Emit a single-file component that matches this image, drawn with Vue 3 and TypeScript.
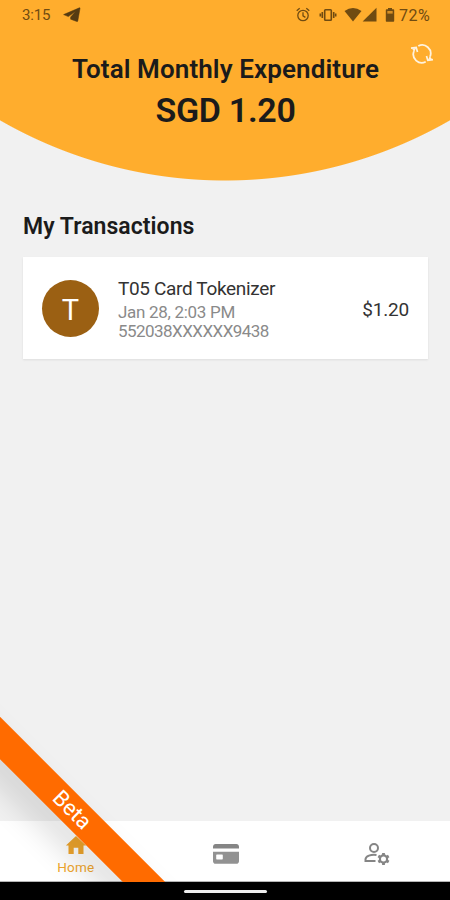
<script setup lang="ts">
interface Transaction {
  merchant: string
  date: string
  card: string
  amount: string
}

const transactions: Transaction[] = [
  { merchant: 'T05 Card Tokenizer', date: 'Jan 28, 2:03 PM', card: '552038XXXXXX9438', amount: '$1.20' },
]
</script>

<template>
  <div class="screen">
    <header class="hero">
      <div class="status">
        <span class="clock">3:15</span>
        <svg class="telegram" width="18" height="16" viewBox="0 0 18 16">
          <path d="M16.400.8.6 7.600l4.700 2L12.500 4.600 7.600 10v2.200l6.200 2.300c.6.2.9 0 1-.6L17 1.500c.1-.7-.2-.9-.6-.7Z" fill="currentColor" stroke="currentColor" stroke-width=".5" />
        </svg>
        <span class="fill"></span>
        <svg class="alarm" width="14" height="16" viewBox="0 0 14 16" fill="none" stroke="currentColor" stroke-width="1.300">
          <circle cx="7" cy="8.500" r="5.200" />
          <path d="M.7 3.700 3.700 1.200M13.300 3.700l-3-2.500M7 5.200v3.600l2.400 1.600" />
        </svg>
        <svg class="vibrate" width="18" height="16" viewBox="0 0 18 16" fill="none" stroke="currentColor" stroke-width="1.600">
          <rect x="5.700" y="2.700" width="6.600" height="10.600" rx=".8" />
          <path d="M3.300 5v6M1.300 6.500v3M14.700 5v6M16.700 6.500v3" />
        </svg>
        <svg class="wifi" width="18" height="16" viewBox="0 0 18 16">
          <path d="M.5 4.100Q9-2.100 17.500 4.100L9 14.600Z" fill="currentColor" />
        </svg>
        <svg class="signal" width="15" height="16" viewBox="0 0 15 16">
          <path d="M14.500.8v13.700H.6Z" fill="currentColor" />
        </svg>
        <svg class="battery" width="10" height="16" viewBox="0 0 10 16">
          <path d="M3 1h4v1.300h1.200c.6 0 1 .4 1 1v10.500c0 .6-.4 1-1 1H1.800c-.6 0-1-.4-1-1V3.300c0-.6.4-1 1-1H3Z" fill="currentColor" />
          <path d="M2.300 4h5.400v2.600H2.300Z" fill="#d68f25" />
        </svg>
        <span class="percent">72%</span>
      </div>
      <svg class="refresh" width="24" height="22" viewBox="0 0 24 22" fill="none" stroke="#fff3df" stroke-width="1.800">
        <path d="M8.300 3A8.500 8.500 0 0 1 20.100 13.600M15.700 18.800A8.500 8.500 0 0 1 3.900 8.200" />
        <path d="M1 5.200 6.200 4.500 7.500 9M23 16.700l-5.200.7-1.300-4.500" stroke-width="1.700" />
        <path d="M2 5.600 6 5l-1.800 4ZM22 16.300l-4 .6 1.800-4Z" fill="#fff3df" stroke="none" />
      </svg>
      <h1 class="title">Total Monthly Expenditure</h1>
      <p class="total">SGD 1.20</p>
    </header>

    <main class="content">
      <h2 class="heading">My Transactions</h2>
      <article v-for="item in transactions" :key="item.card" class="card">
        <div class="avatar">{{ item.merchant.charAt(0) }}</div>
        <div class="details">
          <span class="merchant">{{ item.merchant }}</span>
          <span class="date">{{ item.date }}</span>
          <span class="number">{{ item.card }}</span>
        </div>
        <span class="amount">{{ item.amount }}</span>
      </article>
    </main>

    <nav class="tabs">
      <div class="tab active">
        <svg width="22" height="20" viewBox="0 0 22 20">
          <path d="M8.700 19v-6.200h4.600V19h5.200v-8.500h2.600L11 1 .9 10.500h2.600V19Z" fill="currentColor" />
        </svg>
        <span class="label">Home</span>
      </div>
      <div class="tab wallet">
        <svg width="28" height="22" viewBox="0 0 28 22">
          <path d="M1 5.500V3.800C1 2.300 2.100 1 3.600 1h20.800C25.900 1 27 2.300 27 3.800v1.700Z" fill="#858585" />
          <path fill-rule="evenodd" d="M1 8.800h26v9.400c0 1.500-1.100 2.600-2.600 2.600H3.600C2.100 20.800 1 19.700 1 18.200ZM5.200 11.500c-.7 0-1 .4-1 1v3c0 .6.3 1 1 1h4.600c.7 0 1-.4 1-1v-3c0-.6-.3-1-1-1Z" fill="#929292" />
        </svg>
      </div>
      <div class="tab profile">
        <svg width="28" height="24" viewBox="0 0 28 24" fill="none" stroke="#858585" stroke-width="2">
          <circle cx="11" cy="6" r="4" />
          <path d="M13.500 13C8 12.200 2.500 14.200 2.500 17.300V19h10" />
          <circle cx="20.500" cy="17" r="3.600" stroke-width="2.200" />
          <path d="M20.500 11v2.500M20.500 20.500V23M15.300 14l2.200 1.300M23.500 18.700l2.200 1.300M15.300 20l2.200-1.300M23.500 15.300l2.200-1.300" stroke-width="2.800" />
        </svg>
      </div>
    </nav>
    <footer class="gesture"><span class="handle"></span></footer>

    <div class="ribbon-clip"><div class="ribbon"><span>Beta</span></div></div>
  </div>
</template>

<style>
body {
  margin: 0;
  background: #f1f1f1;
}
</style>

<style scoped>
.screen {
  position: relative;
  display: flex;
  flex-direction: column;
  width: 450px;
  height: 900px;
  overflow: hidden;
  background: #f1f1f1;
  color: #1b1b1b;
  font-family: Roboto, "Liberation Sans", sans-serif;
}
.hero {
  position: relative;
  height: 181px;
  flex: none;
  background: radial-gradient(circle at 225px -270px, #ffad2d 450px, #f1f1f1 451px);
  text-align: center;
}
.status {
  display: flex;
  align-items: center;
  height: 30px;
  padding: 0 20px 0 22px;
  color: #704b11;
  font-size: 15px;
}
.clock { width: 41px; text-align: left; letter-spacing: -0.2px; }
.telegram { color: #553b12; }
.fill { flex: 1; }
.vibrate { margin-left: 9px; }
.wifi { margin-left: 7px; }
.battery { margin-left: 8px; }
.percent { margin-left: 4px; font-size: 16px; letter-spacing: 0.4px; }
.refresh { position: absolute; top: 43px; right: 16px; }
.title {
  margin: 23px 0 0;
  padding-left: 1px;
  font-size: 26px;
  line-height: 32px;
  font-weight: 600;
  letter-spacing: 0.1px;
}
.total {
  margin: 5px 0 0;
  padding-left: 1px;
  font-size: 34px;
  line-height: 40px;
  font-weight: 600;
  letter-spacing: -0.3px;
}
.content { flex: 1; padding: 32px 22px 0 23px; }
.heading {
  margin: 0 0 16px;
  font-size: 23px;
  line-height: 28px;
  font-weight: 600;
  letter-spacing: 0.05px;
}
.card {
  display: flex;
  align-items: center;
  height: 102px;
  box-sizing: border-box;
  padding: 2px 19px 0 19px;
  background: #fff;
  box-shadow: 0 1px 2px #ddd;
}
.avatar {
  display: flex;
  align-items: center;
  justify-content: center;
  width: 57px;
  height: 57px;
  margin-bottom: 2px;
  padding-top: 3px;
  box-sizing: border-box;
  border-radius: 50%;
  background: #9b6013;
  color: #fff;
  font-size: 29px;
}
.details {
  display: flex;
  flex: 1;
  flex-direction: column;
  margin-left: 19px;
  color: #8a8a8a;
  font-size: 17px;
  line-height: 19px;
}
.date { letter-spacing: -0.3px; }
.number { letter-spacing: -0.54px; }
.merchant { color: #333; font-size: 19px; line-height: 22px; margin-bottom: 3px; letter-spacing: -0.34px; }
.amount { color: #333; font-size: 19px; letter-spacing: -0.2px; }
.tabs {
  display: grid;
  grid-template-columns: repeat(3, 1fr);
  height: 61px;
  box-sizing: border-box;
  padding: 2px 0 0 1px;
  border-bottom: 1px solid #b5b5b5;
  flex: none;
  background: #fff;
}
.tab {
  display: flex;
  flex-direction: column;
  align-items: center;
  justify-content: center;
  padding-top: 3px;
}
.tab.active { padding-top: 6px; color: #f0a62d; }
.tab.wallet { padding-left: 1px; }
.tab.profile { padding-left: 3px; }
.label { margin-top: 4px; font-size: 13.5px; line-height: 16px; letter-spacing: 0.2px; }
.gesture {
  display: flex;
  align-items: center;
  justify-content: center;
  height: 18px;
  flex: none;
  background: #000;
}
.handle { width: 83px; height: 3px; border-radius: 2px; background: #eee; }
.ribbon-clip {
  position: absolute;
  inset: 0 0 18px;
  overflow: hidden;
  pointer-events: none;
}
.ribbon {
  position: absolute;
  left: -78.500px;
  top: 794.500px;
  width: 300px;
  height: 30px;
  transform: rotate(45deg);
  background: #ff6b00;
  box-shadow: 0 18px 32px -4px rgba(0, 0, 0, 0.18);
  color: #fff;
  font-size: 22px;
  line-height: 30px;
  text-align: center;
}
</style>
